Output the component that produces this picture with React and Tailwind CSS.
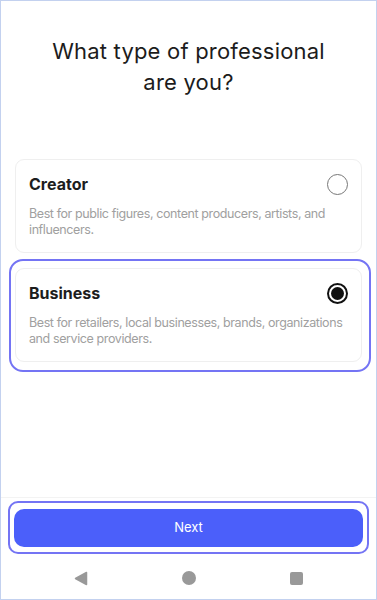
import React, { useState } from "react";

const options = [
  {
    id: "creator",
    title: "Creator",
    description: "Best for public figures, content producers, artists, and influencers.",
  },
  {
    id: "business",
    title: "Business",
    description: "Best for retailers, local businesses, brands, organizations and service providers.",
  },
];

const App = () => {
  const [selected, setSelected] = useState("business");

  return (
    <div
      className="h-[600px] w-[377px] flex flex-col bg-white border border-[#c3d1ef] overflow-hidden"
      style={{ fontFamily: "Inter, 'Noto Sans', sans-serif" }}
    >
      <h1 className="mt-[35px] px-10 text-center text-[22px] leading-[31px] text-[#1c1c1c] tracking-[0.2px]">
        What type of professional
        <br />
        are you?
      </h1>

      <div className="mt-[61px] flex flex-col gap-[15px] pl-[14px] pr-[14px]">
        {options.map((opt) => {
          const active = selected === opt.id;
          return (
            <button
              key={opt.id}
              onClick={() => setSelected(opt.id)}
              className="relative text-left"
            >
              {active && (
                <span className="absolute -left-[6px] -right-[9px] -top-[9px] -bottom-[10px] rounded-[14px] border-2 border-[#7474f4]" />
              )}
              <div className="h-[94px] rounded-[9px] border border-[#efefef] pl-[13px] pr-[13px] pt-[12px]">
                <div className="h-[24px] flex items-center justify-between">
                  <span className="text-[16px] font-bold text-[#1d1d1d]">{opt.title}</span>
                  {active ? (
                    <span className="h-[21px] w-[21px] rounded-full border-2 border-[#111] flex items-center justify-center">
                      <span className="h-[13px] w-[13px] rounded-full bg-[#111]" />
                    </span>
                  ) : (
                    <span className="h-[21px] w-[21px] rounded-full border-[1.5px] border-[#777]" />
                  )}
                </div>
                <p className="mt-[10px] text-[12.5px] leading-[16px] tracking-[-0.4px] text-[#a0a0a0]">
                  {opt.description}
                </p>
              </div>
            </button>
          );
        })}
      </div>

      <div className="mt-auto border-t border-[#f3f3f3] pt-[3px] px-[7px]">
        <div className="rounded-[10px] border-2 border-[#7474f4] px-[4px] pt-[6px] pb-[5px]">
          <button className="h-[38px] w-full rounded-[10px] bg-[#4b5ffa] text-[13px] text-white">
            Next
          </button>
        </div>
        <div className="h-[45px] pt-[3px] flex items-center justify-center gap-[94px]">
          <svg width="14" height="15" viewBox="0 0 14 15">
            <path d="M12.5 1.5 L1.5 7.5 L12.5 13.5 Z" fill="#999" stroke="#999" strokeWidth="1.5" strokeLinejoin="round" />
          </svg>
          <span className="h-[14px] w-[14px] rounded-full bg-[#999]" />
          <span className="h-[13px] w-[13px] rounded-[2px] bg-[#999]" />
        </div>
      </div>
    </div>
  );
};

export default App;
